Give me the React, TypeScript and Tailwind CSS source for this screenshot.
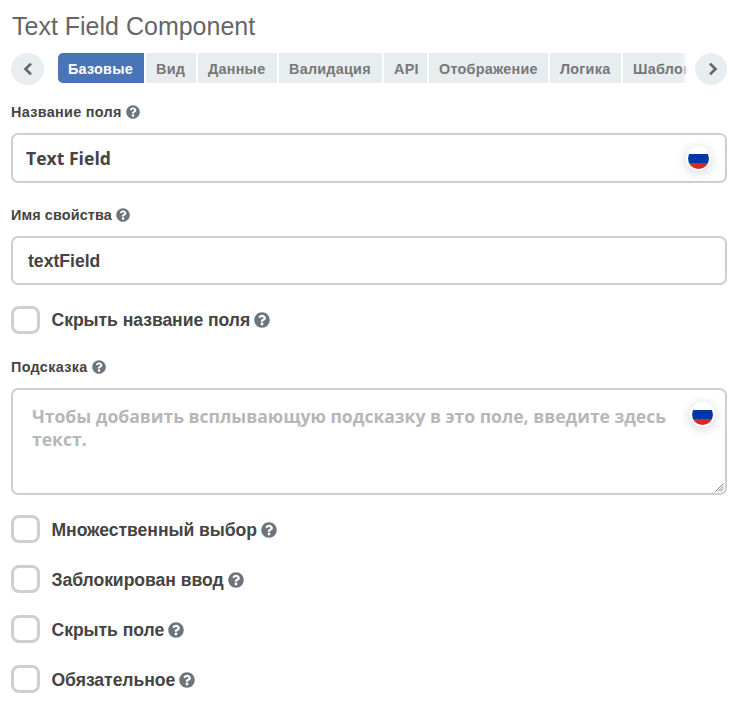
import React from "react";
import { FaQuestionCircle } from "react-icons/fa";

const tabs = [
  { label: "Базовые", width: "w-[86px]" },
  { label: "Вид", width: "w-[50px]" },
  { label: "Данные", width: "w-[79px]" },
  { label: "Валидация", width: "w-[103px]" },
  { label: "API", width: "w-[43px]" },
  { label: "Отображение", width: "w-[119px]" },
  { label: "Логика", width: "w-[71px]" },
  { label: "Шаблоны", width: "w-[90px]" },
];

function Chevron({ right = false }: { right?: boolean }) {
  return (
    <svg width="10" height="14" viewBox="0 0 10 14" fill="none" stroke="currentColor" strokeWidth="2.7">
      <path d={right ? "M2 1.6L7.5 7L2 12.4" : "M8 1.6L2.5 7L8 12.4"} />
    </svg>
  );
}

function Flag() {
  return (
    <span className="flex h-[25px] w-[25px] overflow-hidden rounded-full bg-white p-[2px] shadow-[0_2px_12px_rgba(0,0,0,0.18)]">
      <span className="flex h-[21px] w-[21px] flex-col overflow-hidden rounded-full">
        <span className="h-[6px] bg-white" />
        <span className="h-[9px] bg-[#0039a6]" />
        <span className="h-[6px] bg-[#d52b1e]" />
      </span>
    </span>
  );
}

function FieldLabel({ children, tracking = "tracking-[0.32px]" }: { children: string; tracking?: string }) {
  return (
    <div className="flex h-5 items-center gap-[4px] text-[14.4px] leading-5 font-bold">
      <span className={tracking}>{children}</span>
      <FaQuestionCircle className="size-[14px] text-[#6c757d]" />
    </div>
  );
}

function CheckRow({ children, low = true }: { children: string; low?: boolean }) {
  return (
    <label className="flex h-7 items-center">
      <input type="checkbox" className="h-7 w-[29px] appearance-none rounded-[8px] border-3 border-[#cfcfcf] bg-white" />
      <span className={`ml-[11.5px] flex items-center gap-1 ${low ? "pt-[2px]" : ""}`}>
        <span className="text-[17.6px] leading-7 font-bold tracking-[-0.06px]">{children}</span>
        <FaQuestionCircle className="size-[16px] text-[#6c757d]" />
      </span>
    </label>
  );
}

export default function App() {
  return (
    <main className="h-[724px] w-[745px] overflow-hidden bg-white pl-[11px] font-['Liberation_Sans',Arial,sans-serif] text-[#444]">
      <h1 className="h-[53px] pt-[11px] pl-px text-[25px] leading-[30px] text-[#666]">Text Field Component</h1>
      <nav className="flex h-8 w-[716px]">
        <button className="flex h-8 w-[33px] items-center justify-center rounded-full bg-[#e8edf0] text-[#666]">
          <Chevron />
        </button>
        <div className="relative ml-[14px] flex h-[30px] w-[630px] gap-[2px] overflow-hidden">
          {tabs.map((tab, i) => (
            <button
              key={tab.label}
              className={`${tab.width} h-[30px] shrink-0 pt-[3px] pl-[10px] text-left text-[14.4px] font-bold tracking-[0.24px] whitespace-nowrap ${
                i === 0 ? "rounded-l-[5px] bg-[#4a74b8] text-white" : "bg-[#e8edf0] text-[#777]"
              }`}
            >
              {tab.label}
            </button>
          ))}
          <span className="absolute top-0 right-0 h-[30px] w-[7px] bg-linear-to-r from-transparent to-white" />
        </div>
        <button className="ml-[7px] flex size-8 items-center justify-center rounded-full bg-[#e8edf0] pl-[3px] text-[#666]">
          <Chevron right />
        </button>
      </nav>

      <div className="mt-[17px]">
        <FieldLabel>Название поля</FieldLabel>
      </div>
      <div className="mt-[11px] flex h-[50px] w-[716px] items-center rounded-[7px] border-2 border-[#cfcfcf] pr-[14px] pl-[13px]">
        <span className="flex-1 font-['Open_Sans',sans-serif] text-[17.6px] font-bold">Text Field</span>
        <Flag />
      </div>

      <div className="mt-[22px]">
        <FieldLabel tracking="tracking-[0.12px]">Имя свойства</FieldLabel>
      </div>
      <div className="mt-[11px] flex h-[49px] w-[716px] items-center rounded-[7px] border-2 border-[#cfcfcf] pt-[2px] pl-[15px] text-[17.6px] font-bold">
        textField
      </div>

      <div className="mt-[21px]">
        <CheckRow low={false}>Скрыть название поля</CheckRow>
      </div>

      <div className="mt-[23px]">
        <FieldLabel>Подсказка</FieldLabel>
      </div>
      <div className="relative mt-[11px] flex h-[107px] w-[716px] items-start justify-between rounded-[7px] border-2 border-[#cfcfcf] pt-[15px] pr-[10px] pl-[19px]">
        <p className="w-[640px] font-['Open_Sans',sans-serif] text-[17.6px] leading-[23px] font-bold tracking-[-0.03px] text-[#b7b7b7]">
          Чтобы добавить всплывающую подсказку в это поле, введите здесь
          <br />
          текст.
        </p>
        <div className="-mt-[3px]">
          <Flag />
        </div>
        <svg className="absolute right-[1px] bottom-[1px]" width="9" height="9" viewBox="0 0 9 9" fill="none" stroke="#777" strokeWidth="0.9">
          <path d="M0.5 8.5L8.5 0.5M3 8.5L8.5 3M5.5 8.5L8.5 5.5" />
        </svg>
      </div>

      <div className="mt-5 flex flex-col gap-[22px]">
        <CheckRow>Множественный выбор</CheckRow>
        <CheckRow>Заблокирован ввод</CheckRow>
        <CheckRow>Скрыть поле</CheckRow>
        <CheckRow>Обязательное</CheckRow>
      </div>
    </main>
  );
}
